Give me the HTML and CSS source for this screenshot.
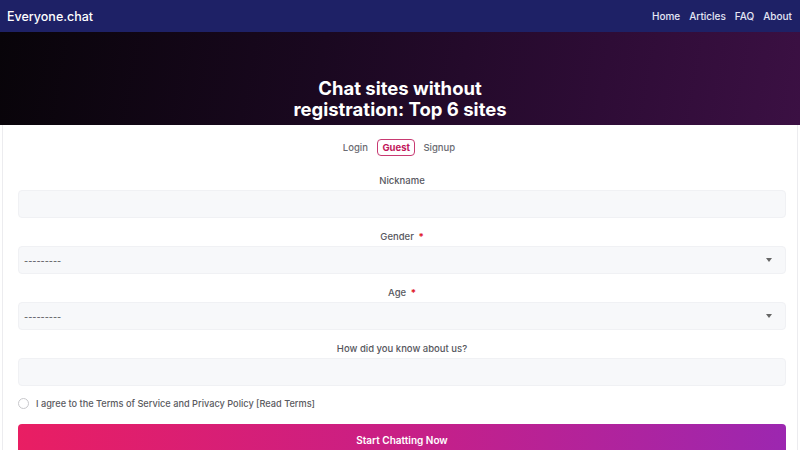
FILE: index.html
```html
<!DOCTYPE html>
<html lang="en">
<head>
<meta charset="utf-8">
<title>Everyone.chat</title>
<link rel="stylesheet" href="styles.css">
</head>
<body>
<header class="navbar">
  <a class="brand" href="#">Everyone.chat</a>
  <nav class="links">
    <a href="#">Home</a>
    <a href="#">Articles</a>
    <a href="#">FAQ</a>
    <a href="#">About</a>
  </nav>
</header>
<section class="hero">
  <h1>Chat sites without<br>registration: Top 6 sites</h1>
</section>
<main class="card">
  <div class="tabs">
    <span class="tab">Login</span>
    <span class="tab active">Guest</span>
    <span class="tab">Signup</span>
  </div>
  <form class="form">
    <div class="group">
      <label class="label">Nickname</label>
      <div class="field"></div>
    </div>
    <div class="group">
      <label class="label">Gender <span class="req">*</span></label>
      <div class="field select"><span class="ph">---------</span><span class="caret"></span></div>
    </div>
    <div class="group">
      <label class="label">Age <span class="req">*</span></label>
      <div class="field select"><span class="ph">---------</span><span class="caret"></span></div>
    </div>
    <div class="group">
      <label class="label">How did you know about us?</label>
      <div class="field"></div>
    </div>
    <div class="agree">
      <span class="radio"></span>
      <span>I agree to the Terms of Service and Privacy Policy [Read Terms]</span>
    </div>
    <button type="button" class="submit">Start Chatting Now</button>
  </form>
</main>
</body>
</html>
```

FILE: styles.css
```css
* { box-sizing: border-box; }
html, body { margin: 0; padding: 0; }
body {
  font-family: Inter, "Noto Sans", sans-serif;
  background: #ffffff;
  width: 800px;
  height: 450px;
  overflow: hidden;
}
.navbar {
  height: 32px;
  background: #1e2166;
  display: flex;
  align-items: center;
  justify-content: space-between;
  padding: 0 8px 0 7px;
}
.brand {
  color: #ffffff;
  text-decoration: none;
  font-size: 12.5px;
  font-weight: 500;
}
.links { display: flex; gap: 9px; }
.links a {
  color: #e4e6f5;
  text-decoration: none;
  font-size: 10px;
  font-weight: 500;
}
.hero {
  height: 93px;
  background: linear-gradient(100deg, #080409 0%, #1a0820 40%, #2e0c36 75%, #3b1043 100%);
  display: flex;
  align-items: flex-end;
  justify-content: center;
  padding-bottom: 5px;
}
.hero h1 {
  margin: 0;
  color: #ffffff;
  font-size: 18.5px;
  font-weight: 700;
  line-height: 21px;
  text-align: center;
}
.card {
  margin: 0 2px;
  border-left: 1px solid #ececef;
  border-right: 1px solid #ececef;
  padding: 13px 11px 0 15px;
  height: 325px;
}
.tabs {
  display: flex;
  justify-content: center;
  gap: 8px;
  height: 19px;
  align-items: center;
  padding-right: 6px;
}
.tab {
  font-size: 9.5px;
  color: #6b6b72;
  font-weight: 500;
}
.tab.active {
  color: #c2185b;
  font-weight: 700;
  border: 1.5px solid #c83a72;
  border-radius: 4px;
  padding: 2px 4.5px;
  margin-left: 1px;
}
.form {
  display: flex;
  flex-direction: column;
  gap: 11px;
  margin-top: 16px;
}
.group { display: flex; flex-direction: column; }
.label {
  text-align: center;
  font-size: 9.5px;
  line-height: 15px;
  color: #57575e;
  font-weight: 500;
  margin-bottom: 2px;
}
.req { color: #e0202e; font-weight: 700; margin-left: 2px; }
.field {
  height: 28px;
  background: #f7f8fa;
  border: 1px solid #f0f1f4;
  border-radius: 4px;
  display: flex;
  align-items: center;
  justify-content: space-between;
  padding: 0 13px 0 5px;
}
.ph { font-size: 9px; color: #4a4a50; }
.caret {
  width: 0; height: 0;
  border-left: 3.5px solid transparent;
  border-right: 3.5px solid transparent;
  border-top: 4px solid #666;
}
.agree {
  display: flex;
  align-items: center;
  gap: 7px;
  font-size: 9.2px;
  color: #5a5a60;
  font-weight: 500;
  height: 18px;
  margin-top: -3px;
}
.radio {
  width: 11px; height: 11px;
  border: 1px solid #c8c8cc;
  border-radius: 50%;
  background: #fff;
}
.submit {
  margin-top: 1px;
  height: 32px;
  border: none;
  border-radius: 4px;
  background: linear-gradient(90deg, #e91e63 0%, #c81f86 50%, #9c27b0 100%);
  color: #ffffff;
  font-family: inherit;
  font-size: 10px;
  font-weight: 600;
}
```
